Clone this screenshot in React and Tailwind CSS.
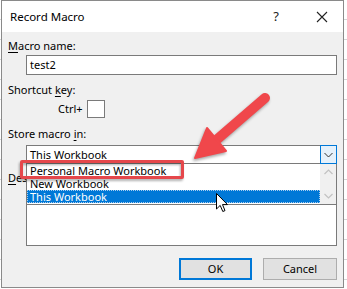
export default function App() {
  return (
    <div className="relative h-[289px] w-[347px] overflow-hidden bg-white bg-[repeating-linear-gradient(to_bottom,#ffffff_0px,#ffffff_19px,#d6d6d6_19px,#d6d6d6_20px)] font-['Noto_Sans',sans-serif] text-[11px] text-[#000]">
      {/* dialog window */}
      <div className="ml-[1px] flex h-[288px] w-[343px] flex-col border border-[#8a8a8a] bg-[#f0f0f0]">
        <div className="flex h-[31px] items-center bg-white pl-[8px]">
          <span className="text-[11.5px]">Record Macro</span>
          <span className="ml-auto w-[24px] text-center text-[13px] text-[#222]">?</span>
          <span className="ml-[22px] mr-[9px] flex w-[24px] justify-center">
            <svg width="12" height="12" viewBox="0 0 12 12">
              <path d="M1 1 L11 11 M11 1 L1 11" stroke="#222" strokeWidth="1.1" />
            </svg>
          </span>
        </div>

        <div className="flex flex-1 flex-col pl-[6px]">
          <div className="mt-[6px] leading-[16px]">
            <u className="underline-offset-2">M</u>acro name:
          </div>
          <div className="ml-[18px] mt-[1px] h-[20px] w-[311px] border border-[#7a7a7a] bg-white pl-[3px] leading-[18px]">
            test2
          </div>

          <div className="mt-[7px] leading-[16px]">
            Shortcut <u className="underline-offset-2">k</u>ey:
          </div>
          <div className="mt-[2px] flex h-[18px] items-center">
            <span className="ml-[50px]">Ctrl+</span>
            <span className="ml-[4px] h-[18px] w-[18px] border border-[#7a7a7a] bg-white" />
          </div>

          <div className="mt-[8px] leading-[16px]">
            Store macro <u className="underline-offset-2">i</u>n:
          </div>
          <div className="ml-[18px] mt-[3px] flex h-[19px] w-[311px] items-center border border-[#7a7a7a] bg-white pl-[3px]">
            <span className="flex-1 leading-[17px]">This Workbook</span>
            <span className="-mr-px flex h-[19px] w-[17px] items-center justify-center border border-[#0078d7] bg-[#e5f1fb]">
              <svg width="9" height="6" viewBox="0 0 9 6">
                <path d="M0.5 1 L4.5 5 L8.5 1" fill="none" stroke="#333" strokeWidth="1" />
              </svg>
            </span>
          </div>

          <div className="mt-[6px] leading-[16px]">
            <u className="underline-offset-2">D</u>escription:
          </div>
          <div className="ml-[18px] mt-[2px] h-[58px] w-[311px] border border-[#7a7a7a] bg-white" />

          <div className="ml-[171px] mt-[12px] flex">
            <button className="flex h-[22px] w-[73px] items-center justify-center border-2 border-[#0078d7] bg-[#e1e1e1]">
              OK
            </button>
            <button className="ml-[11px] flex h-[22px] w-[74px] items-center justify-center border border-[#adadad] bg-[#e1e1e1]">
              Cancel
            </button>
          </div>
        </div>
      </div>

      {/* open dropdown list */}
      <div className="absolute left-[26px] top-[164px] flex h-[41px] w-[311px] border border-t-0 border-[#7a7a7a] bg-white">
        <div className="flex flex-1 flex-col">
          <div className="h-[13px] pl-[3px] leading-[13px]">Personal Macro Workbook</div>
          <div className="h-[13px] pl-[3px] leading-[13px]">New Workbook</div>
          <div className="h-[13px] border border-dotted border-[#a8cdef] bg-[#0078d7] pl-[2px] leading-[11px] text-white">
            This Workbook
          </div>
        </div>
        <div className="flex w-[16px] flex-col items-center justify-between bg-[#f0f0f0] py-[5px]">
          <svg width="9" height="6" viewBox="0 0 9 6">
            <path d="M0.5 5 L4.5 1 L8.5 5" fill="none" stroke="#c2c2c2" strokeWidth="1.2" />
          </svg>
          <svg width="9" height="6" viewBox="0 0 9 6">
            <path d="M0.5 1 L4.5 5 L8.5 1" fill="none" stroke="#c2c2c2" strokeWidth="1.2" />
          </svg>
        </div>
      </div>

      {/* annotation box */}
      <div className="absolute left-[20px] top-[160px] h-[19px] w-[164px] rounded-[2px] border-[3px] border-[#e5474b] drop-shadow-[-1px_2px_1px_rgba(0,0,0,0.3)]" />

      {/* annotation arrow */}
      <svg className="pointer-events-none absolute left-0 top-0" width="347" height="289" viewBox="0 0 347 289">
        <g style={{ filter: "drop-shadow(-1px 2px 1.5px rgba(0,0,0,0.35))" }}>
          <line x1="265" y1="98" x2="214" y2="142" stroke="#f0474b" strokeWidth="10" strokeLinecap="round" />
          <polygon points="195,158 226,151 207,128" fill="#f0474b" stroke="#f0474b" strokeWidth="2" strokeLinejoin="round" />
        </g>
      </svg>

      {/* mouse pointer */}
      <svg className="absolute left-[216px] top-[193px]" width="13" height="20" viewBox="0 0 13 20">
        <path d="M0.5 0.5 L0.5 16 L4.2 12.4 L6.8 18.5 L9 17.6 L6.5 11.6 L11.5 11.6 Z" fill="#fff" stroke="#000" strokeWidth="1" strokeLinejoin="round" />
      </svg>
    </div>
  );
}
